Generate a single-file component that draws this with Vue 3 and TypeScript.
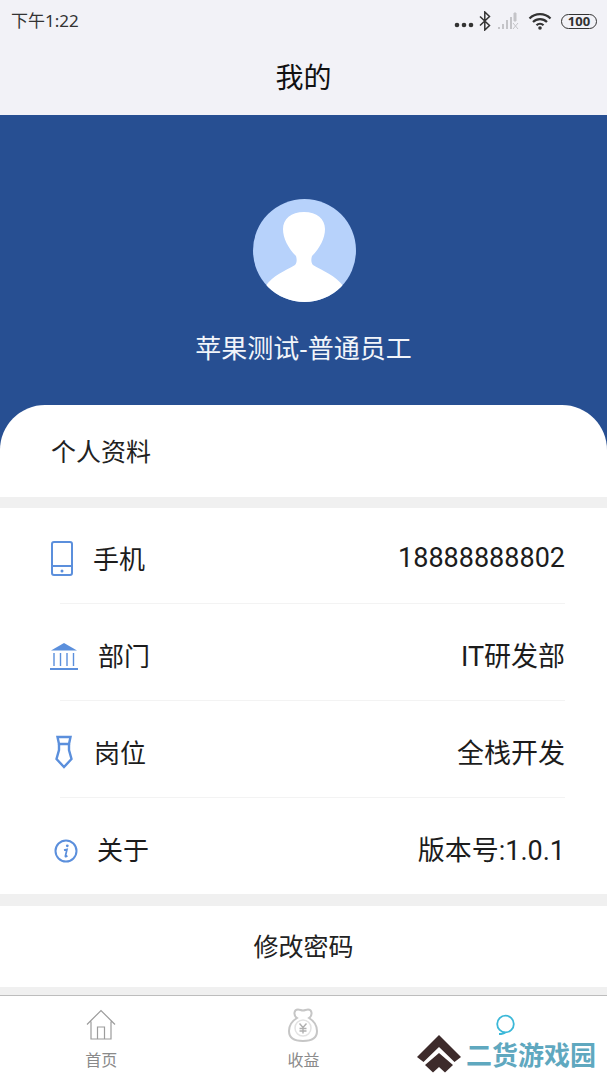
<template>
  <div class="page">
    <div class="top">
      <div class="status">
        <span class="time">下午1:22</span>
        <div class="status-icons">
          <svg class="dots" width="20" height="6" viewBox="0 0 20 6"><circle cx="3" cy="3" r="2.300" fill="#333" /><circle cx="10" cy="3" r="2.300" fill="#333" /><circle cx="17" cy="3" r="2.300" fill="#333" /></svg>
          <svg class="bt" width="12" height="20" viewBox="0 0 12 20"><path d="M1 5.500l9.500 9L5.800 19V1l4.700 4.500L1 14.500" fill="none" stroke="#333" stroke-width="1.500" /></svg>
          <svg class="sig" width="22" height="18" viewBox="0 0 22 18"><path d="M1 15h2v2H1zM5 12h2v5H5zM9 8h2v9H9zM13 5h2v12h-2z" fill="#c4c4c8" /><path d="M17 1h2v8h-2zM16 11l5 6M21 11l-5 6" fill="#c4c4c8" stroke="#c4c4c8" stroke-width="1" /></svg>
          <svg class="wifi" width="24" height="18" viewBox="0 0 24 18"><path d="M1.500 6.500a15 15 0 0 1 21 0M5 10a10 10 0 0 1 14 0M8.500 13.300a5 5 0 0 1 7 0" fill="none" stroke="#333" stroke-width="2.200" /><circle cx="12" cy="16" r="1.800" fill="#333" /></svg>
          <span class="battery">100</span>
        </div>
      </div>
      <div class="title">我的</div>
    </div>

    <div class="hero">
      <div class="avatar">
        <svg width="103" height="103" viewBox="0 0 103 103">
          <path d="M12 88C20 76 32 72 42 66C44 64 44 60 43 57C35 49 30 39 30 30C30 20 38 13 51 13C64 13 72 20 72 30C72 39 67 49 59 57C58 60 58 64 60 66C70 72 82 76 91 88L91 103L12 103Z" fill="#fff" />
        </svg>
      </div>
      <div class="name">苹果测试-普通员工</div>
    </div>

    <div class="card">
      <div class="card-title">个人资料</div>
    </div>
    <div class="gap"></div>

    <div class="list">
      <template v-for="(item, i) in rows" :key="item.label">
        <div class="row">
          <span class="row-icon" :class="item.icon">
            <svg v-if="item.icon === 'phone'" width="24" height="37" viewBox="0 0 24 37" fill="none" stroke="#5b8fdc" stroke-width="2">
              <rect x="2" y="2" width="20" height="33" rx="2" />
              <path d="M2 26h20" />
              <circle cx="12" cy="31" r="1.500" fill="#5b8fdc" stroke="none" />
            </svg>
            <svg v-else-if="item.icon === 'bank'" width="28" height="28" viewBox="0 0 28 28" fill="none" stroke="#5b8fdc" stroke-width="1.400">
              <path d="M14 1L27 8.500H1Z" fill="#5b8fdc" stroke="none" />
              <path d="M4 11v13M10.500 11v13M17 11v13M23.500 11v13" />
              <path d="M0 27h28" stroke-width="2" />
            </svg>
            <svg v-else-if="item.icon === 'tie'" width="18" height="34" viewBox="0 0 18 34" fill="none" stroke="#5b8fdc" stroke-width="2.400">
              <path d="M2.500 2h13L14 9H4Z" />
              <path d="M4 9L4 15 1.500 24 9 32l7.500-8L14 15V9" />
            </svg>
            <svg v-else width="24" height="24" viewBox="0 0 24 24">
              <circle cx="12" cy="12" r="10.500" fill="none" stroke="#5b8fdc" stroke-width="2" />
              <circle cx="13.300" cy="6.800" r="1.400" fill="#5b8fdc" />
              <path d="M10 11.200l3-.7-1.600 6.500c-.2 1 .6 1 2-.3" fill="none" stroke="#5b8fdc" stroke-width="1.700" />
            </svg>
          </span>
          <span class="row-label">{{ item.label }}</span>
          <span class="row-value">{{ item.value }}</span>
        </div>
        <div v-if="i < rows.length - 1" class="divider"></div>
      </template>
    </div>
    <div class="gap"></div>

    <div class="password">修改密码</div>
    <div class="gap short"></div>

    <div class="tabbar">
      <div class="tab">
        <svg width="30" height="31" viewBox="0 0 30 31" fill="none" stroke="#9c9c9c" stroke-width="1.200">
          <path d="M1 15L15 1l14 14M5 12v17.500h20V12M11.500 29.500V17.500h7v12" />
        </svg>
        <span>首页</span>
      </div>
      <div class="tab">
        <svg width="30" height="34" viewBox="0 0 30 34" fill="none" stroke="#c6c6c6" stroke-width="2">
          <path d="M9 10C5 7 6 1.500 10 1.500C12 1.500 13 2.500 15 2.500C17 2.500 18 1.500 20 1.500C24 1.500 25 7 21 10C26 13 29 18 29 23C29 30 23 33 15 33C7 33 1 30 1 23C1 18 4 13 9 10Z" />
          <circle cx="15" cy="20" r="8" stroke="#e2e2e2" stroke-width="1.500" />
          <path d="M11.500 15.500l3.500 4 3.500-4M15 19.500v6M11.500 20.500h7M11.500 23h7" stroke-width="1.400" stroke="#b0b0b0" />
        </svg>
        <span>收益</span>
      </div>
      <div class="tab">
        <svg width="22" height="22" viewBox="0 0 22 22" fill="none" stroke="#3bb8d8" stroke-width="1.800">
          <circle cx="10.500" cy="10" r="8.300" />
          <path d="M4 20c3 0 5-.5 6-1.500" />
        </svg>
        <span class="hidden-label">我的</span>
      </div>
    </div>

    <div class="watermark">
      <svg width="44" height="38" viewBox="0 0 44 38" fill="#3d2b2b">
        <path d="M22 0L44 22 37.500 27 22 12 6.500 27 0 22Z" />
        <path d="M22 18L36 30 28 37.500 22 32 16 37.500 8 30Z" />
      </svg>
      <span>二货游戏园</span>
    </div>
  </div>
</template>

<script setup lang="ts">
interface Row {
  icon: string
  label: string
  value: string
}

const rows: Row[] = [
  { icon: 'phone', label: '手机', value: '18888888802' },
  { icon: 'bank', label: '部门', value: 'IT研发部' },
  { icon: 'tie', label: '岗位', value: '全栈开发' },
  { icon: 'info', label: '关于', value: '版本号:1.0.1' },
]
</script>

<style>
html,
body {
  margin: 0;
  background: #fff;
}
</style>

<style scoped>
.page {
  position: relative;
  width: 607px;
  height: 1080px;
  overflow: hidden;
  font-family: "Noto Sans", "Noto Sans CJK SC", sans-serif;
  color: #1c1c1c;
  background: #f0f0f0;
}

.top {
  height: 115px;
  background: #f2f2f7;
}

.status {
  height: 42px;
  display: flex;
  align-items: center;
  justify-content: space-between;
  padding: 0 10px 0 11px;
}

.time {
  font-size: 17px;
  color: #333;
  margin-top: -4px;
}

.status-icons {
  display: flex;
  align-items: center;
}

.dots {
  margin-top: 7px;
}

.bt {
  margin-left: 5px;
}

.sig {
  margin-left: 6px;
}

.wifi {
  margin-left: 9px;
}

.battery {
  margin-left: 9px;
  width: 36px;
  height: 15px;
  box-sizing: border-box;
  border: 1.500px solid #333;
  border-radius: 8px;
  font-size: 13px;
  font-weight: 700;
  line-height: 12px;
  text-align: center;
  color: #333;
}

.title {
  text-align: center;
  font-size: 28px;
  line-height: 36px;
  margin-top: 17px;
  color: #111;
}

.hero {
  height: 335px;
  margin-bottom: -45px;
  padding-top: 84px;
  box-sizing: border-box;
  background: #274f92;
  display: flex;
  flex-direction: column;
  align-items: center;
}

.avatar {
  width: 103px;
  height: 103px;
  margin-left: 1px;
  border-radius: 50%;
  overflow: hidden;
  background: #b7d2fb;
}

.avatar svg {
  display: block;
}

.name {
  margin-top: 28px;
  font-size: 26px;
  line-height: 36px;
  color: #f2f5fa;
}

.card {
  position: relative;
  height: 92px;
  border-radius: 45px 45px 0 0;
  background: #fff;
  display: flex;
  align-items: center;
  padding-left: 51px;
}

.card-title {
  font-size: 25px;
  line-height: 34px;
  color: #222;
}

.gap {
  height: 12px;
  background: #f0f0f0;
}

.card + .gap {
  height: 11px;
}

.gap.short {
  height: 8px;
}

.list {
  background: #fff;
}

.row {
  height: 96px;
  box-sizing: border-box;
  padding: 5px 42px 0 0;
  display: flex;
  align-items: center;
  font-size: 26px;
}

.row:first-child {
  height: 95px;
}

.row-icon {
  display: flex;
  justify-content: center;
}

.row-icon svg {
  display: block;
}

.row-icon.phone {
  margin-left: 50px;
  margin-right: 19px;
}

.row-icon.bank {
  margin-left: 50px;
  margin-right: 20px;
  transform: translateY(1px);
}

.row-icon.tie {
  margin-left: 55px;
  margin-right: 21px;
}

.row-icon.info {
  margin-left: 54px;
  margin-right: 19px;
  transform: translateY(2px);
}

.row-label {
  color: #1c1c1c;
}

.row-value {
  margin-left: auto;
  font-family: Roboto, "Noto Sans CJK SC", sans-serif;
  font-size: 27px;
  color: #1c1c1c;
}

.divider {
  height: 1px;
  margin: 0 42px 0 60px;
  background: #f3f3f3;
}

.password {
  height: 81px;
  padding-bottom: 4px;
  box-sizing: border-box;
  display: flex;
  align-items: center;
  justify-content: center;
  background: #fff;
  font-size: 25px;
  color: #222;
}

.tabbar {
  height: 85px;
  box-sizing: border-box;
  border-top: 1px solid #bdbdbd;
  background: #fff;
  display: grid;
  grid-template-columns: repeat(3, 1fr);
  padding-top: 12px;
}

.tab {
  display: flex;
  flex-direction: column;
  align-items: center;
  font-size: 16px;
  line-height: 22px;
  color: #8a8a8a;
}

.tab svg {
  height: 34px;
}

.tab span {
  margin-top: 7px;
}

.hidden-label {
  visibility: hidden;
}

.watermark {
  position: absolute;
  left: 417px;
  bottom: 7px;
  display: flex;
  align-items: center;
  gap: 5px;
  padding: 0 6px 0 0;
  background: #fff;
  font-size: 26px;
  font-weight: 700;
  color: #5fa8bf;
}
</style>
